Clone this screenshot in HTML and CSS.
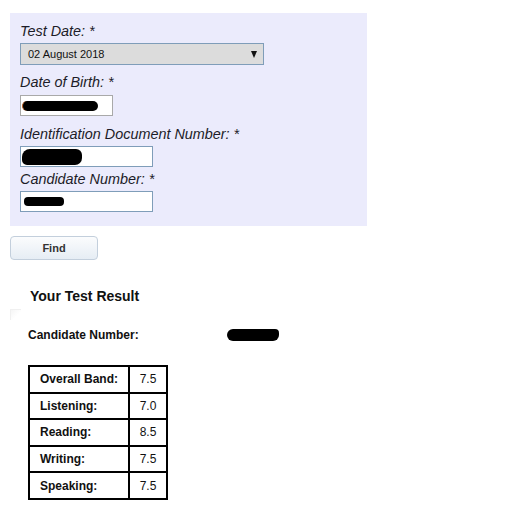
FILE: index.html
```html
<!DOCTYPE html>
<html>
<head>
<meta charset="utf-8">
<link rel="stylesheet" href="styles.css">
</head>
<body>
<div class="page">
  <form class="panel">
    <div class="label first">Test Date: *</div>
    <div class="select">
      <span class="select-text">02 August 2018</span>
      <span class="arrow"></span>
    </div>
    <div class="label l2">Date of Birth: *</div>
    <div class="input dob"><span class="blob blob-dob"></span></div>
    <div class="label l3">Identification Document Number: *</div>
    <div class="input wide blue"><span class="blob blob-id"></span></div>
    <div class="label l4">Candidate Number: *</div>
    <div class="input wide blue"><span class="blob blob-cand"></span></div>
  </form>
  <button class="find" type="button">Find</button>
  <h2 class="result-title">Your Test Result</h2>
  <div class="corner"></div>
  <div class="cand-row">
    <span class="cand-label">Candidate Number:</span>
    <span class="blob blob-result"></span>
  </div>
  <table class="scores">
    <tr><th>Overall Band:</th><td>7.5</td></tr>
    <tr><th>Listening:</th><td>7.0</td></tr>
    <tr><th>Reading:</th><td>8.5</td></tr>
    <tr><th>Writing:</th><td>7.5</td></tr>
    <tr><th>Speaking:</th><td>7.5</td></tr>
  </table>
</div>
</body>
</html>
```

FILE: styles.css
```css
html, body {
  margin: 0;
  padding: 0;
  background: #fff;
}
body {
  font-family: "Liberation Sans", Arial, sans-serif;
  color: #1c1c28;
}
.page {
  padding: 13px 0 0 10px;
}
.panel {
  width: 347px;
  background: #ebebfc;
  padding: 10px 0 14px 10px;
  margin: 0;
}
.label {
  font-style: italic;
  font-size: 14.4px;
  line-height: 17px;
  height: 17px;
}
.label.first { margin-bottom: 3px; }
.label.l2 { margin-top: 9px; margin-bottom: 4px; }
.label.l3 { margin-top: 10px; margin-bottom: 3px; }
.label.l4 { margin-top: 4px; margin-bottom: 3px; }
.select {
  box-sizing: border-box;
  width: 244px;
  height: 22px;
  background: #dcdcdc;
  border: 1px solid #7f9db9;
  display: flex;
  align-items: center;
  justify-content: space-between;
  padding: 0 6px 0 7px;
}
.select-text {
  font-size: 11px;
  color: #111;
}
.arrow {
  width: 0;
  height: 0;
  border-left: 3.5px solid transparent;
  border-right: 3.5px solid transparent;
  border-top: 7px solid #111;
  margin-top: 1px;
}
.input {
  box-sizing: border-box;
  height: 21px;
  background: #fff;
  border: 1px solid #a9a9a9;
  display: flex;
  align-items: center;
  padding-left: 1px;
}
.input.dob { width: 93px; }
.input.wide { width: 133px; }
.input.blue { border-color: #7f9db9; }
.blob {
  display: block;
  background: #000;
}
.blob-dob {
  width: 75px;
  height: 10px;
  border-radius: 5px;
  border-left: 1px solid #c06020;
}
.blob-id {
  width: 60px;
  height: 16px;
  border-radius: 8px 6px 7px 5px;
}
.blob-cand {
  width: 40px;
  height: 9px;
  border-radius: 4px;
  margin-left: 2px;
}
.find {
  display: block;
  margin-top: 10px;
  width: 88px;
  height: 24px;
  border: 1px solid #c3cfdc;
  border-radius: 4px;
  background: linear-gradient(#fbfcfd, #e6edf4);
  font-family: "Liberation Sans", Arial, sans-serif;
  font-weight: bold;
  font-size: 11px;
  color: #333;
  padding: 0;
}
.result-title {
  margin: 28px 0 0 20px;
  font-size: 14px;
  line-height: 16px;
  font-weight: bold;
  color: #111;
}
.corner {
  width: 10px;
  height: 10px;
  margin-top: 5px;
  border-top: 1px solid #f0f0f0;
  border-left: 1px solid #f0f0f0;
  background: linear-gradient(135deg, #f5f5f5, #fff 60%);
}
.cand-row {
  display: flex;
  align-items: center;
  margin: 8px 0 0 18px;
  height: 14px;
}
.cand-label {
  font-size: 12px;
  font-weight: bold;
  color: #111;
  width: 199px;
}
.blob-result {
  width: 52px;
  height: 12px;
  border-radius: 6px 4px 6px 6px;
  margin-top: -1px;
}
.scores {
  margin: 23px 0 0 18px;
  border-collapse: collapse;
  table-layout: fixed;
  width: 140px;
}
.scores th, .scores td {
  border: 2px solid #000;
  height: 24.6px;
  font-size: 12px;
  padding: 0;
  color: #111;
}
.scores th {
  width: 88px;
  text-align: left;
  font-weight: bold;
  padding-left: 10px;
}
.scores td {
  text-align: center;
  font-weight: normal;
}
```
